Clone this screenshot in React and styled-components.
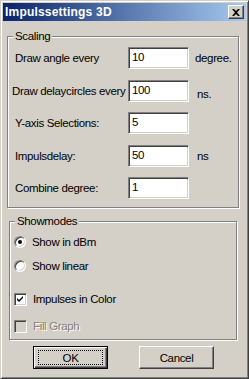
import React from "react";
import styled, { createGlobalStyle } from "styled-components";

const GlobalStyle = createGlobalStyle`
  html, body {
    margin: 0;
    padding: 0;
    background: #d4d0c8;
  }
  body {
    font-family: "Liberation Sans", Arial, sans-serif;
    font-size: 11.5px;
    letter-spacing: -0.35px;
    color: #000;
  }
`;

const Window = styled.div`
  box-sizing: border-box;
  width: 249px;
  height: 379px;
  background: #d4d0c8;
  border: 1px solid;
  border-color: #d4d0c8 #404040 #404040 #d4d0c8;
  box-shadow: inset 1px 1px 0 #fff, inset -1px -1px 0 #808080;
  padding: 2px;
  display: flex;
  flex-direction: column;
`;

const TitleBar = styled.div`
  height: 18px;
  display: flex;
  align-items: center;
  justify-content: space-between;
  padding: 0 2px 0 2px;
  background: linear-gradient(to right, #0a246a, #a6caf0);
`;

const Title = styled.span`
  color: #fff;
  font-weight: bold;
  font-size: 12px;
  letter-spacing: 0.2px;
`;

const CloseButton = styled.div`
  box-sizing: border-box;
  width: 16px;
  height: 14px;
  background: #d4d0c8;
  border: 1px solid;
  border-color: #fff #404040 #404040 #fff;
  box-shadow: inset -1px -1px 0 #808080;
  display: flex;
  align-items: center;
  justify-content: center;
`;

const Body = styled.div`
  display: flex;
  flex-direction: column;
  align-items: flex-start;
`;

const Group = styled.div`
  position: relative;
  box-sizing: border-box;
  margin-top: ${(p) => p.top}px;
  margin-left: ${(p) => p.left}px;
  width: ${(p) => p.width}px;
  height: ${(p) => p.height}px;
  border: 1px solid #808080;
  box-shadow: inset 1px 1px 0 #fff, 1px 1px 0 #fff;
`;

const Legend = styled.span`
  position: absolute;
  top: -8px;
  left: 5px;
  padding: 0 2px;
  background: #d4d0c8;
  line-height: 14px;
`;

const FieldGrid = styled.div`
  display: grid;
  grid-template-columns: 113px 61px auto;
  grid-auto-rows: 22px;
  row-gap: 10.5px;
  align-items: center;
  padding: 10px 0 0 7px;
`;

const Label = styled.span`
  margin-left: ${(p) => p.shift || 0}px;
  white-space: nowrap;
`;

const Unit = styled.span`
  margin-left: ${(p) => p.indent}px;
  margin-top: ${(p) => p.drop || 0}px;
`;

const Input = styled.div`
  box-sizing: border-box;
  height: 22px;
  background: #fff;
  border: 1px solid;
  border-color: #808080 #fff #fff #808080;
  box-shadow: inset 1px 1px 0 #404040, inset -1px -1px 0 #d4d0c8;
  padding: 2px 0 0 3px;
  line-height: 14px;
`;

const OptionList = styled.div`
  display: flex;
  flex-direction: column;
  padding-left: 4px;
`;

const Option = styled.label`
  display: flex;
  align-items: center;
  gap: 6px;
  height: 16px;
  margin-top: ${(p) => p.top}px;
  color: ${(p) => (p.disabled ? "#808080" : "#000")};
  text-shadow: ${(p) => (p.disabled ? "1px 1px 0 #fff" : "none")};
`;

const Radio = styled.span`
  box-sizing: border-box;
  width: 12px;
  height: 12px;
  border-radius: 50%;
  background: #fff;
  border: 1px solid;
  border-color: #808080 #fff #fff #808080;
  box-shadow: inset 1px 1px 0 #404040, inset -1px -1px 0 #d4d0c8;
  display: flex;
  align-items: center;
  justify-content: center;
  &::after {
    content: "";
    width: 4px;
    height: 4px;
    border-radius: 50%;
    background: ${(p) => (p.checked ? "#000" : "transparent")};
  }
`;

const Check = styled.span`
  box-sizing: border-box;
  width: 13px;
  height: 13px;
  background: ${(p) => (p.disabled ? "#d4d0c8" : "#fff")};
  border: 1px solid;
  border-color: #808080 #fff #fff #808080;
  box-shadow: inset 1px 1px 0 #404040, inset -1px -1px 0 #d4d0c8;
  display: flex;
  align-items: center;
  justify-content: center;
`;

const ButtonRow = styled.div`
  display: flex;
  gap: 31px;
  margin: 6px 0 0 30px;
`;

const Button = styled.div`
  box-sizing: border-box;
  width: 75px;
  height: 23px;
  display: flex;
  align-items: center;
  justify-content: center;
  background: #d4d0c8;
  border: 1px solid;
  border-color: ${(p) => (p.primary ? "#000" : "#fff #404040 #404040 #fff")};
  box-shadow: ${(p) =>
    p.primary
      ? "inset 1px 1px 0 #fff, inset -1px -1px 0 #404040, inset -2px -2px 0 #808080"
      : "inset -1px -1px 0 #808080"};
`;

const Focus = styled.span`
  box-sizing: border-box;
  width: 65px;
  height: 15px;
  border: 1px dotted #000;
  display: flex;
  align-items: center;
  justify-content: center;
`;

const fields = [
  { label: "Draw angle every", value: "10", unit: "degree.", indent: 6 },
  { label: "Draw delaycircles every", value: "100", unit: "ns.", indent: 8, shift: -3, drop: 6 },
  { label: "Y-axis Selections:", value: "5" },
  { label: "Impulsdelay:", value: "50", unit: "ns", indent: 8 },
  { label: "Combine degree:", value: "1" },
];

const CheckMark = () => (
  <svg width="7" height="7" viewBox="0 0 7 7">
    <path d="M0 2 L2 4 L6 0 L6 2 L2 6 L0 4 Z" fill="#000" />
  </svg>
);

export default function App() {
  return (
    <>
      <GlobalStyle />
      <Window>
        <TitleBar>
          <Title>Impulssettings 3D</Title>
          <CloseButton>
            <svg width="8" height="7" viewBox="0 0 8 7">
              <path
                d="M0 0h2l2 2 2-2h2L5 3.5 8 7H6L4 5 2 7H0l3-3.5z"
                fill="#000"
              />
            </svg>
          </CloseButton>
        </TitleBar>
        <Body>
          <Group top={15} left={4} width={232} height={172}>
            <Legend>Scaling</Legend>
            <FieldGrid>
              {fields.map((f) => (
                <React.Fragment key={f.label}>
                  <Label shift={f.shift}>{f.label}</Label>
                  <Input>{f.value}</Input>
                  {f.unit ? (
                    <Unit indent={f.indent} drop={f.drop}>
                      {f.unit}
                    </Unit>
                  ) : (
                    <span />
                  )}
                </React.Fragment>
              ))}
            </FieldGrid>
          </Group>
          <Group top={13} left={6} width={228} height={119}>
            <Legend>Showmodes</Legend>
            <OptionList>
              <Option top={12}>
                <Radio checked />
                Show in dBm
              </Option>
              <Option top={8}>
                <Radio />
                Show linear
              </Option>
              <Option top={17}>
                <Check>
                  <CheckMark />
                </Check>
                Impulses in Color
              </Option>
              <Option top={11} disabled>
                <Check disabled />
                Fill Graph
              </Option>
            </OptionList>
          </Group>
          <ButtonRow>
            <Button primary>
              <Focus>OK</Focus>
            </Button>
            <Button>Cancel</Button>
          </ButtonRow>
        </Body>
      </Window>
    </>
  );
}
